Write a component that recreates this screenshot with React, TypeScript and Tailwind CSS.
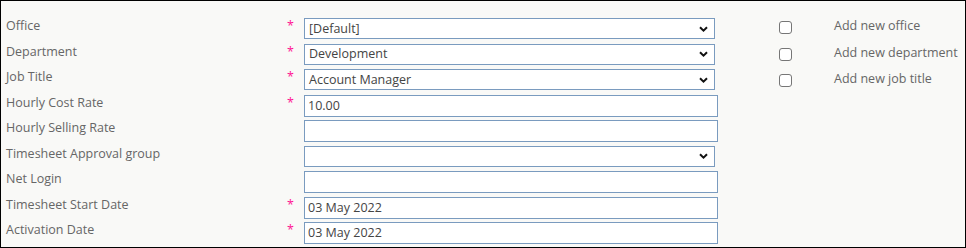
import React from 'react';

type Row = {
  label: string;
  required?: boolean;
  kind: 'select' | 'input';
  value?: string;
};

const rows: Row[] = [
  { label: 'Office', required: true, kind: 'select', value: '[Default]' },
  { label: 'Department', required: true, kind: 'select', value: 'Development' },
  { label: 'Job Title', required: true, kind: 'select', value: 'Account Manager' },
  { label: 'Hourly Cost Rate', required: true, kind: 'input', value: '10.00' },
  { label: 'Hourly Selling Rate', kind: 'input' },
  { label: 'Timesheet Approval group', kind: 'select' },
  { label: 'Net Login', kind: 'input' },
  { label: 'Timesheet Start Date', required: true, kind: 'input', value: '03 May 2022' },
  { label: 'Activation Date', required: true, kind: 'input', value: '03 May 2022' },
];

const extras = ['Add new office', 'Add new department', 'Add new job title'];

function Chevron() {
  return (
    <svg width="9" height="6" viewBox="0 0 9 6" className="absolute right-[6px] top-1/2 -translate-y-1/2">
      <path d="M1 1.2 L4.5 4.6 L8 1.2" fill="none" stroke="#111" strokeWidth="2" />
    </svg>
  );
}

function Control({ row }: { row: Row }) {
  if (row.kind === 'select') {
    return (
      <div className="relative flex h-[21px] w-[411px] items-center border border-[#7a9bbf] bg-white pl-[4px] text-[#444]">
        <span>{row.value}</span>
        <Chevron />
      </div>
    );
  }
  return (
    <div className="flex h-[22px] w-[414px] items-center border border-[#7a9bbf] bg-white pl-[3px] text-[#444]">
      <span>{row.value}</span>
    </div>
  );
}

export default function App() {
  return (
    <div
      className="h-[248px] w-[966px] border border-black bg-[#f9f9f7] text-[12.5px] leading-4"
      style={{ fontFamily: '"Open Sans", "Noto Sans", sans-serif' }}
    >
      <div className="flex pt-[17px]">
        <div className="flex flex-col">
          {rows.map((r) => (
            <div key={r.label} className="flex h-[25.5px] items-start">
              <div className="w-[286px] pl-[5px] text-[#666]">{r.label}</div>
              <div className="w-[17px] text-[#ff1493]">{r.required ? '*' : ''}</div>
              <Control row={r} />
            </div>
          ))}
        </div>
        <div className="ml-[61px] flex flex-col">
          {extras.map((t) => (
            <div key={t} className="flex h-[26.5px] items-start">
              <span className="mt-[3px] h-[13px] w-[13px] rounded-[3px] border border-[#767676] bg-white" />
              <span className="ml-[42px] text-[#666]">{t}</span>
            </div>
          ))}
        </div>
      </div>
    </div>
  );
}
